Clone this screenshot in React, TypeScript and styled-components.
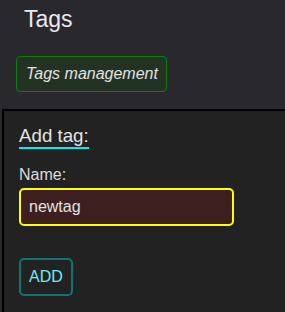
import styled, { createGlobalStyle } from "styled-components";

const GlobalStyle = createGlobalStyle`
  html, body {
    margin: 0;
    padding: 0;
    background: #28282d;
  }
  body {
    font-family: "Liberation Sans", Arial, sans-serif;
    color: #e6e6e6;
  }
`;

const Page = styled.div`
  min-height: 312px;
  display: flex;
  flex-direction: column;
`;

const Title = styled.h1`
  margin: 6px 0 0 24px;
  font-size: 23px;
  font-weight: normal;
  line-height: 26px;
  color: #e8e8ee;
`;

const Badge = styled.div`
  align-self: flex-start;
  margin: 24px 0 0 16px;
  height: 34px;
  padding: 0 8px 0 9px;
  display: flex;
  align-items: center;
  border: 1px solid #0b7f0b;
  border-radius: 4px;
  background: #233223;
  font-style: italic;
  font-size: 16px;
  color: #e2e2e2;
`;

const Panel = styled.section`
  flex: 1;
  margin: 17px 0 0 2px;
  padding: 14px 16px 16px 15px;
  background: #222222;
  border-top: 2px solid #000;
  border-left: 2px solid #000;
`;

const Heading = styled.h3`
  display: inline-block;
  margin: 0;
  font-size: 18.72px;
  font-weight: normal;
  line-height: 22px;
  border-bottom: 2px solid #00f0f0;
  color: #e4e4e4;
`;

const Field = styled.label`
  display: flex;
  flex-direction: column;
  gap: 4px;
  margin-top: 17px;
  font-size: 16px;
  color: #dddddd;
`;

const Input = styled.input`
  box-sizing: border-box;
  width: 215px;
  height: 38px;
  padding: 0 8px;
  background: #3d1f20;
  border: 2px solid #ffff00;
  border-radius: 5px;
  outline: none;
  font-family: inherit;
  font-size: 16px;
  color: #e2e2e2;
`;

const Button = styled.button`
  align-self: flex-start;
  margin-top: 32px;
  box-sizing: border-box;
  height: 38px;
  padding: 0 8px;
  background: transparent;
  border: 2px solid #0f7474;
  border-radius: 5px;
  font-family: inherit;
  font-size: 16px;
  color: #66f0f0;
  cursor: pointer;
`;

export default function App() {
  return (
    <>
      <GlobalStyle />
      <Page>
        <Title>Tags</Title>
        <Badge>Tags management</Badge>
        <Panel>
          <Heading>Add tag:</Heading>
          <Field>
            Name:
            <Input defaultValue="newtag" />
          </Field>
          <Button>ADD</Button>
        </Panel>
      </Page>
    </>
  );
}
